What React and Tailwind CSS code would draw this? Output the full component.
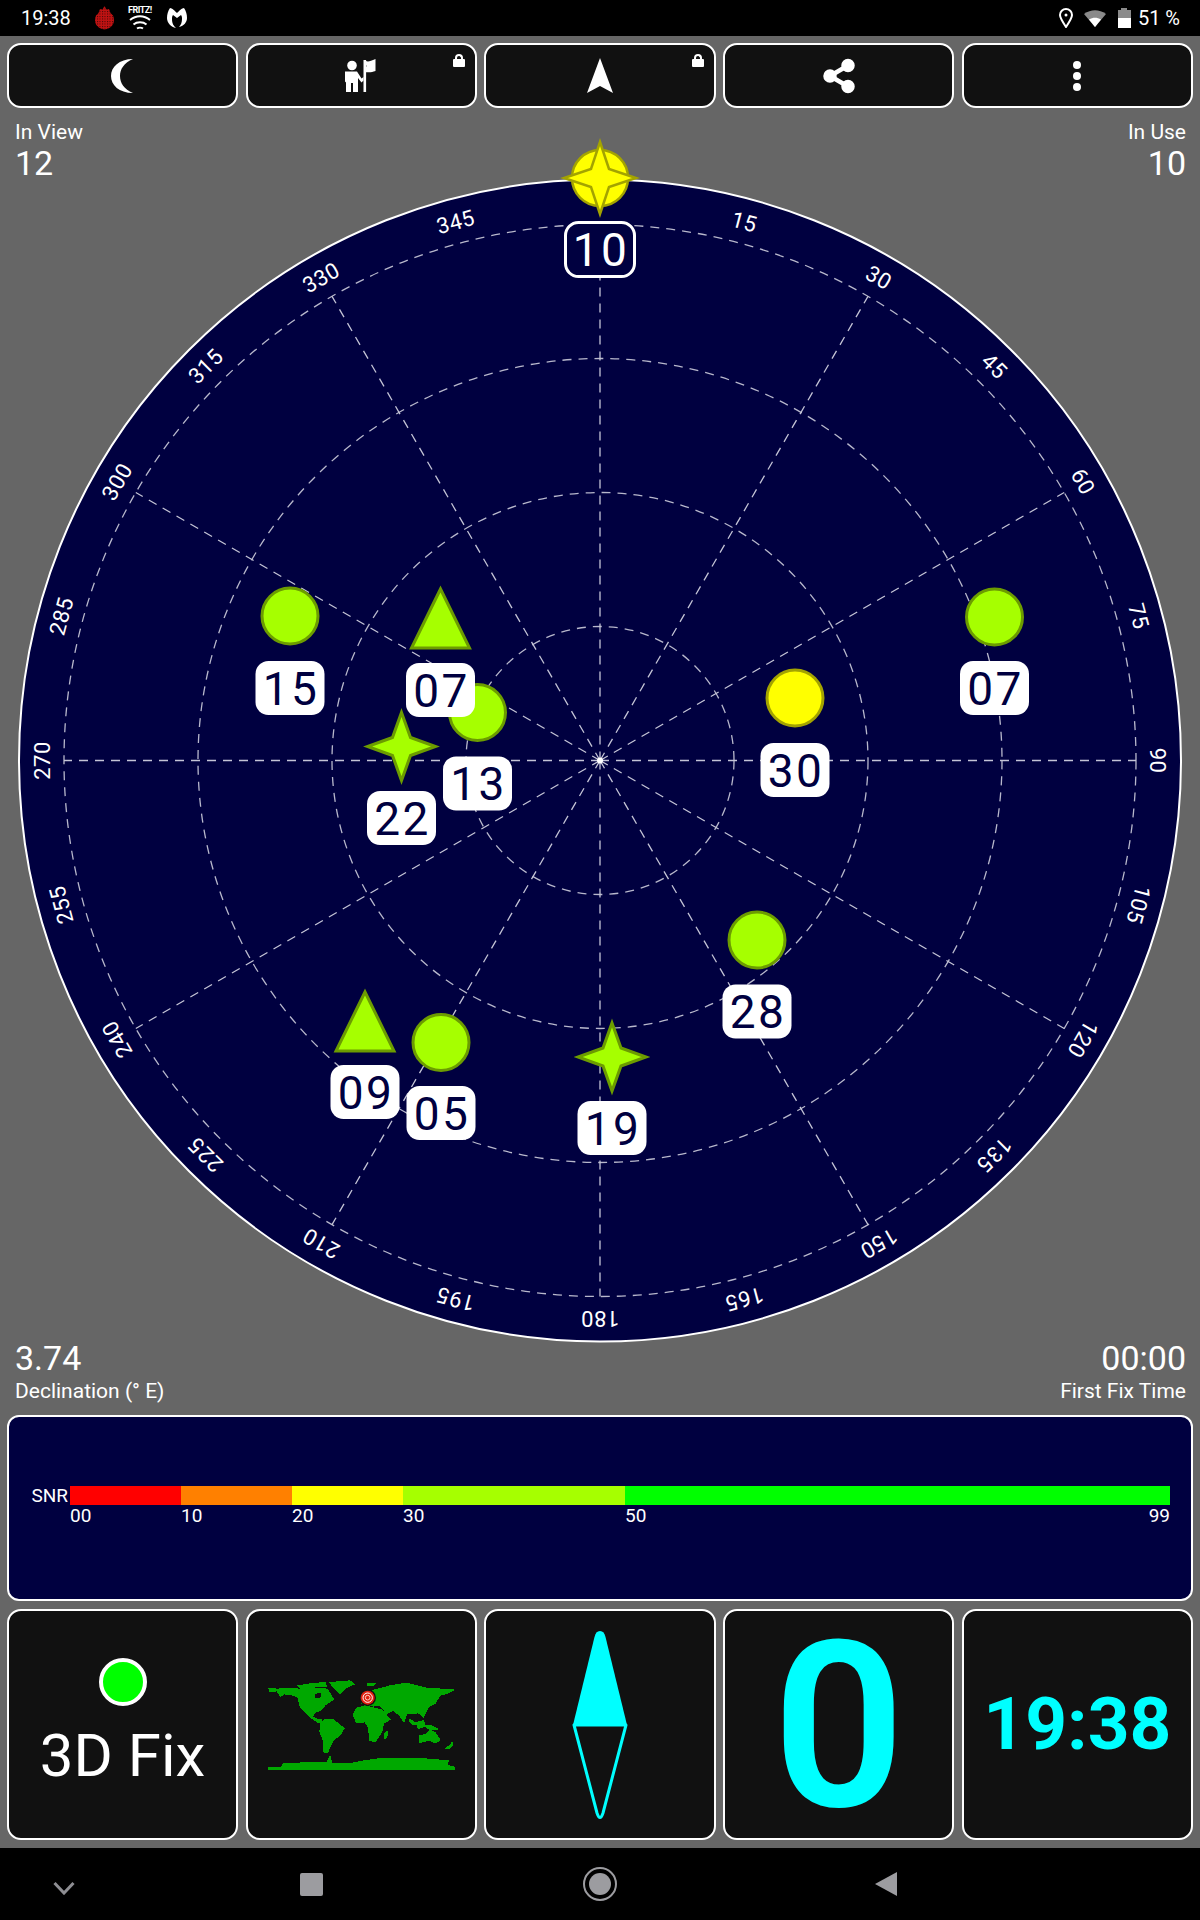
import { Share2 } from "lucide-react";

const CX = 600;
const CY = 760.5;
const rings = [134, 268, 402, 536];
const spokes = [0, 30, 60, 90, 120, 150];
const bearings = [15, 30, 45, 60, 75, 90, 105, 120, 135, 150, 165, 180, 195, 210, 225, 240, 255, 270, 285, 300, 315, 330, 345];

const GREEN = "#a6ff00";
const GREEN_EDGE = "#6c9c00";
const YELLOW = "#ffff00";
const YELLOW_EDGE = "#a3a300";

const sats = [
  { id: "15", type: "circle", x: 290, y: 616, ly: 688 },
  { id: "13", type: "circle", x: 477.5, y: 712.5, ly: 783.5 },
  { id: "07", type: "triangle", x: 440.5, y: 630, ly: 690 },
  { id: "22", type: "star", x: 401.5, y: 746.5, ly: 818 },
  { id: "07", type: "circle", x: 994.5, y: 617, ly: 688 },
  { id: "30", type: "circle", x: 795, y: 698, ly: 770, yellow: true },
  { id: "28", type: "circle", x: 757, y: 940, ly: 1011.5 },
  { id: "19", type: "star", x: 612, y: 1057, ly: 1128 },
  { id: "05", type: "circle", x: 441, y: 1042.5, ly: 1113 },
  { id: "09", type: "triangle", x: 365, y: 1033, ly: 1092 },
];

const starPath = (x, y, r = 34, w = 9) =>
  `M${x} ${y - r}L${x + w} ${y - w}L${x + r} ${y}L${x + w} ${y + w}L${x} ${y + r}L${x - w} ${y + w}L${x - r} ${y}L${x - w} ${y - w}Z`;

const Marker = ({ s }) => {
  const fill = s.yellow ? YELLOW : GREEN;
  const edge = s.yellow ? YELLOW_EDGE : GREEN_EDGE;
  if (s.type === "circle") return <circle cx={s.x} cy={s.y} r={28} fill={fill} stroke={edge} strokeWidth="3" />;
  if (s.type === "star") return <path d={starPath(s.x, s.y)} fill={fill} stroke={edge} strokeWidth="3" />;
  return (
    <path
      d={`M${s.x} ${s.y - 41}L${s.x + 29} ${s.y + 18}L${s.x - 29} ${s.y + 18}Z`}
      fill={fill}
      stroke={edge}
      strokeWidth="3"
    />
  );
};

const SatLabel = ({ x, y, id, used }) => (
  <g>
    <rect
      x={x - 34.5}
      y={y - 27}
      width="69"
      height="54"
      rx="13"
      fill={used ? "#000040" : "#ffffff"}
      stroke={used ? "#ffffff" : "none"}
      strokeWidth="3"
    />
    <text x={x + 1} y={y + 16.5} textAnchor="middle" fontSize="46" letterSpacing="2.5" fill={used ? "#ffffff" : "#000040"}>
      {id}
    </text>
  </g>
);

const Radar = () => (
  <svg viewBox="0 108 1200 1307" className="block w-full h-full">
    <circle cx={CX} cy={CY} r="581" fill="#000040" stroke="#ffffff" strokeWidth="2" />
    {rings.map((r) => (
      <circle key={r} cx={CX} cy={CY} r={r} fill="none" stroke="#b8b8cc" strokeWidth="1.3" strokeDasharray="9 7" />
    ))}
    {spokes.map((a) => {
      const dx = Math.sin((a * Math.PI) / 180) * 536;
      const dy = Math.cos((a * Math.PI) / 180) * 536;
      return (
        <g key={a} stroke="#c4c4d6" strokeWidth="1.3" strokeDasharray="9 7">
          <line x1={CX} y1={CY} x2={CX + dx} y2={CY - dy} />
          <line x1={CX} y1={CY} x2={CX - dx} y2={CY + dy} />
        </g>
      );
    })}
    <circle cx={CX} cy={CY} r="3" fill="#ffffff" />
    {bearings.map((a) => (
      <text
        key={a}
        x={CX}
        y={CY - 558 + 8}
        fontSize="22"
        letterSpacing="0.5"
        textAnchor="middle"
        fill="#ffffff"
        transform={`rotate(${a} ${CX} ${CY})`}
      >
        {a}
      </text>
    ))}
    <circle cx="600" cy="178" r="28" fill={YELLOW} stroke={YELLOW_EDGE} strokeWidth="2.5" />
    <path d={starPath(600, 178, 36, 9)} fill={YELLOW} stroke={YELLOW_EDGE} strokeWidth="2.5" />
    <SatLabel x={600} y={249.5} id="10" used />
    {sats.map((s) => (
      <Marker key={`m${s.id}${s.x}`} s={s} />
    ))}
    {sats.map((s) => (
      <SatLabel key={`l${s.id}${s.x}`} x={s.x} y={s.ly} id={s.id} />
    ))}
  </svg>
);

const Moon = () => (
  <svg width="24" height="36" viewBox="0 0 24 36">
    <path d="M22 1C8 1 0 9 0 18s8 17 22 17C13 31 9 25 9 18S13 5 22 1Z" fill="#fff" />
  </svg>
);

const FlagPerson = () => (
  <svg width="34" height="34" viewBox="0 0 34 34" fill="#fff">
    <circle cx="8" cy="6.5" r="4.8" />
    <path d="M1 12.5h12l4.5 7 2-1.5v3.5l-2 2-3.5-4.5V33H9v-9H7v9H2v-9.5l-1-1Z" />
    <rect x="19.5" y="1" width="2.6" height="32" />
    <path d="M20 1c3 2 5 2 11.5-1v12c-5 2-8 1-11.5 1l2.5-6Z" />
  </svg>
);

const NavArrow = () => (
  <svg width="28" height="36" viewBox="0 0 28 36">
    <path d="M14 0L27 35L14 28L1 35Z" fill="#fff" />
  </svg>
);

const Dots = () => (
  <div className="flex flex-col gap-[3px]">
    <div className="w-2 h-2 rounded-sm bg-white" />
    <div className="w-2 h-2 rounded-sm bg-white" />
    <div className="w-2 h-2 rounded-sm bg-white" />
  </div>
);

const ToolButton = ({ children, locked }) => (
  <div className="relative flex items-center justify-center h-[65px] rounded-[14px] bg-[#111111] border-2 border-white">
    {children}
    {locked && (
      <div className="absolute top-[9px] right-[10px] flex flex-col items-center">
        <div className="w-[8px] h-[5px] rounded-t-full border-2 border-b-0 border-white" />
        <div className="w-[12px] h-[8px] rounded-[1px] bg-white" />
      </div>
    )}
  </div>
);

const FireIcon = () => (
  <svg width="21" height="24" viewBox="0 0 20 24">
    <defs>
      <pattern id="fireDots" width="2.5" height="2.5" patternUnits="userSpaceOnUse">
        <rect width="2.5" height="2.5" fill="#c01212" />
        <rect width="1" height="1" fill="#3c0808" />
      </pattern>
    </defs>
    <path d="M10 0L12 3.5L14.5 3L16 7L18.5 9.5C21 15 19 22.5 10 23.5C1 22.5 -1 15 1.5 9.5L4 7L5.5 3L8 3.5Z" fill="url(#fireDots)" />
  </svg>
);

const FritzWifi = () => (
  <div className="flex flex-col items-center w-[26px] ml-[-2px]">
    <span className="text-[9px] leading-[9px] font-bold tracking-[-0.5px] text-white">FRITZ!</span>
    <svg width="22" height="15" viewBox="0 0 22 15" fill="none" stroke="#fff" strokeWidth="2">
      <path d="M1 5C7 0 15 0 21 5" />
      <path d="M4.5 9.5C8 6.5 14 6.5 17.5 9.5" />
      <path d="M8 13.5C9.5 12.5 12.5 12.5 14 13.5" />
    </svg>
  </div>
);

const MalwareM = () => (
  <svg width="20" height="20" viewBox="0 0 20 20" fill="#fff">
    <path d="M3 0C1 3 0 6 0 10c0 5 4 9 9 10-2-2-4-4-4-9 0-1 0-3 1-4l4 3 4-3c1 1 1 3 1 4 0 3-1 6-3 8 5-1 8-5 8-9 0-4-1-7-3-10-2 0-5 3-7 5C8 3 5 0 3 0Z" />
  </svg>
);

const StatusBar = () => (
  <div className="flex items-center justify-between h-9 bg-black pl-[21px] pr-[20px] text-white">
    <div className="flex items-center">
      <span className="text-[20px] leading-none">19:38</span>
      <div className="flex items-center ml-[23px] gap-[14px]">
        <FireIcon />
        <FritzWifi />
        <MalwareM />
      </div>
    </div>
    <div className="flex items-center">
      <svg width="16" height="20" viewBox="0 0 16 20" fill="none" stroke="#fff" strokeWidth="2">
        <path d="M8 19C4 13 2 10 2 7a6 6 0 0 1 12 0c0 3-2 6-6 12Z" />
        <circle cx="8" cy="7" r="1.5" fill="#fff" stroke="none" />
      </svg>
      <svg width="24" height="18" viewBox="0 0 24 18" className="ml-[9px]">
        <path d="M1 5C8 0 16 0 23 5L12 18Z" fill="#8a8a8a" />
        <path d="M6 10.5C10 8 14 8 18 10.5L12 18Z" fill="#fff" />
      </svg>
      <div className="ml-[11px] flex flex-col items-center w-[13px] h-[20px]">
        <div className="w-[6px] h-[2px] bg-[#8a8a8a]" />
        <div className="w-[13px] h-[8px] bg-[#8a8a8a]" />
        <div className="w-[13px] h-[10px] bg-white" />
      </div>
      <span className="ml-[7px] text-[20px] leading-none">51 %</span>
    </div>
  </div>
);

const Bar = ({ className }) => <div className={`h-[19px] ${className}`} />;

const SnrPanel = () => (
  <div className="mx-[7px] h-[186px] rounded-[12px] border-2 border-white bg-[#000040] flex flex-col justify-center pl-[16px] pr-[21px] pb-[3px] text-white">
    <div className="flex items-center">
      <span className="w-[45px] pr-[2px] text-right text-[19px] leading-none">SNR</span>
      <div className="flex flex-1">
        <Bar className="w-[111px] bg-[#ff0000]" />
        <Bar className="w-[111px] bg-[#ff8000]" />
        <Bar className="w-[111px] bg-[#ffff00]" />
        <Bar className="w-[222px] bg-[#a6ff00]" />
        <Bar className="flex-1 bg-[#00ff00]" />
      </div>
    </div>
    <div className="flex ml-[45px] text-[19px] leading-[22px]">
      <span className="w-[111px]">00</span>
      <span className="w-[111px]">10</span>
      <span className="w-[111px]">20</span>
      <span className="w-[222px]">30</span>
      <span className="flex-1 flex justify-between">
        <span>50</span>
        <span>99</span>
      </span>
    </div>
  </div>
);

const WorldMap = () => (
  <svg width="220" height="120" viewBox="0 0 660 360" shapeRendering="crispEdges" className="mt-[-9px] ml-[-3px]">
    <g fill="#00a800" stroke="#00a800" strokeWidth="4">
      <path d="M57 86H76V95H60Z" />
      <path d="M78 88L135 85L150 90L180 86L215 85L232 88L250 118L240 125L225 135L212 150L195 157L186 170L205 180L215 178L216 190L203 186L188 176L168 158L150 138L145 112L128 105L102 101L92 108L85 98Z" />
      <path d="M145 78L180 72L225 68L228 78L200 80L170 84L150 84Z" />
      <path d="M240 68L300 63L312 72L290 82L270 100L258 88L248 78Z" />
      <path d="M212 195L225 178L250 180L282 205L270 225L250 240L240 260L232 278L220 275L222 245L210 215Z" />
      <path d="M310 165L320 145L345 138L375 145L395 150L420 178L400 190L395 215L375 245L360 240L355 200L345 185L320 188Z" />
      <path d="M335 130L340 105L375 90L420 78L470 70L530 85L612 90L590 100L570 105L555 130L535 140L520 170L505 158L490 160L470 160L462 185L448 165L430 150L410 160L390 135L370 138L340 130Z" />
      <path d="M403 222L412 215L410 232L403 235Z" />
      <path d="M352 70H375L370 75H352Z" />
      <path d="M480 178L498 190L492 195L478 184Z" />
      <path d="M500 188L520 182L525 198L505 205Z" />
      <path d="M520 195L545 198L565 208L540 208Z" />
      <path d="M510 228L530 222L540 210L555 218L570 240L555 248L540 240L510 247Z" />
      <path d="M590 264L600 256L606 248L608 254L598 264Z" />
      <path d="M57 323L95 322L100 312L180 308L230 308L240 290L245 310L300 312L330 305L400 295L500 295L595 303L590 315L612 322V328H57Z" />
    </g>
    <path d="M195 102L215 98L210 115L195 115Z" fill="#111111" />
    <circle cx="353" cy="113" r="25" fill="#111111" shapeRendering="auto" />
    <g shapeRendering="auto" fill="none">
      <circle cx="353" cy="113" r="21" fill="#e02010" />
      <circle cx="353" cy="113" r="14" stroke="#ffffff" strokeWidth="3" />
      <circle cx="353" cy="113" r="7" stroke="#ffd0c0" strokeWidth="3" />
    </g>
  </svg>
);

const Compass = () => (
  <svg width="60" height="192" viewBox="0 0 60 192" fill="none">
    <path d="M30 2C33 2 34.5 4 35.5 8L57 96H3L24.5 8C25.5 4 27 2 30 2Z" fill="#00ffff" />
    <path d="M4 96H56L33 184C32 187 31 188.5 30 188.5C29 188.5 28 187 27 184Z" stroke="#00ffff" strokeWidth="3" strokeLinejoin="round" />
  </svg>
);

const Tile = ({ children }) => (
  <div className="relative flex flex-col items-center justify-center h-[231px] rounded-[14px] bg-[#111111] border-2 border-white">
    {children}
  </div>
);

const NavBar = () => (
  <div className="relative flex items-center h-[72px] bg-black">
    <svg width="22" height="14" viewBox="0 0 22 14" className="ml-[53px] mt-[7px]" fill="none" stroke="#8e8e93" strokeWidth="3">
      <path d="M1.5 2L11 12L20.5 2" />
    </svg>
    <div className="ml-[225px] w-[23px] h-[23px] rounded-[2px] bg-[#9c9ca0]" />
    <div className="ml-[260px] w-[34px] h-[34px] rounded-full border-2 border-[#9c9ca0] flex items-center justify-center">
      <div className="w-[22px] h-[22px] rounded-full bg-[#9c9ca0]" />
    </div>
    <svg width="22" height="24" viewBox="0 0 22 24" className="ml-[258px]">
      <path d="M22 0V24L0 12Z" fill="#9c9ca0" />
    </svg>
  </div>
);

const App = () => {
  return (
    <div className="flex flex-col w-[1200px] h-[1920px] bg-[#666666] text-white font-[Roboto,sans-serif]">
      <StatusBar />
      <div className="grid grid-cols-5 gap-[7.5px] px-[7px] pt-[7px]">
        <ToolButton>
          <Moon />
        </ToolButton>
        <ToolButton locked>
          <FlagPerson />
        </ToolButton>
        <ToolButton locked>
          <NavArrow />
        </ToolButton>
        <ToolButton>
          <Share2 size={36} strokeWidth={3} fill="#ffffff" color="#ffffff" />
        </ToolButton>
        <ToolButton>
          <Dots />
        </ToolButton>
      </div>

      <div className="relative h-[1307px]">
        <Radar />
        <div className="absolute left-[15px] top-[12px] flex flex-col items-start">
          <span className="text-[21px] leading-[25px]">In View</span>
          <span className="text-[34px] leading-[36px]">12</span>
        </div>
        <div className="absolute right-[14px] top-[12px] flex flex-col items-end">
          <span className="text-[21px] leading-[25px]">In Use</span>
          <span className="text-[34px] leading-[36px]">10</span>
        </div>
        <div className="absolute left-[15px] bottom-[11px] flex flex-col items-start gap-[3px]">
          <span className="text-[34px] leading-[36px]">3.74</span>
          <span className="text-[21px] leading-[25px]">Declination (° E)</span>
        </div>
        <div className="absolute right-[14px] bottom-[11px] flex flex-col items-end gap-[3px]">
          <span className="text-[34px] leading-[36px]">00:00</span>
          <span className="text-[21px] leading-[25px]">First Fix Time</span>
        </div>
      </div>

      <SnrPanel />

      <div className="grid grid-cols-5 gap-[7.5px] px-[7px] mt-[8px]">
        <Tile>
          <div className="w-[48px] h-[48px] rounded-full bg-[#00ff00] border-4 border-white" />
          <span className="text-[60px] leading-[70px] mt-[15px]">3D Fix</span>
        </Tile>
        <Tile>
          <WorldMap />
        </Tile>
        <Tile>
          <Compass />
        </Tile>
        <Tile>
          <span className="text-[232px] leading-none font-semibold text-[#00ffff] mt-[4px]">0</span>
        </Tile>
        <Tile>
          <span className="text-[73px] leading-none font-bold text-[#00ffff]">19:38</span>
        </Tile>
      </div>

      <div className="h-2" />
      <NavBar />
    </div>
  );
};

export default App;
